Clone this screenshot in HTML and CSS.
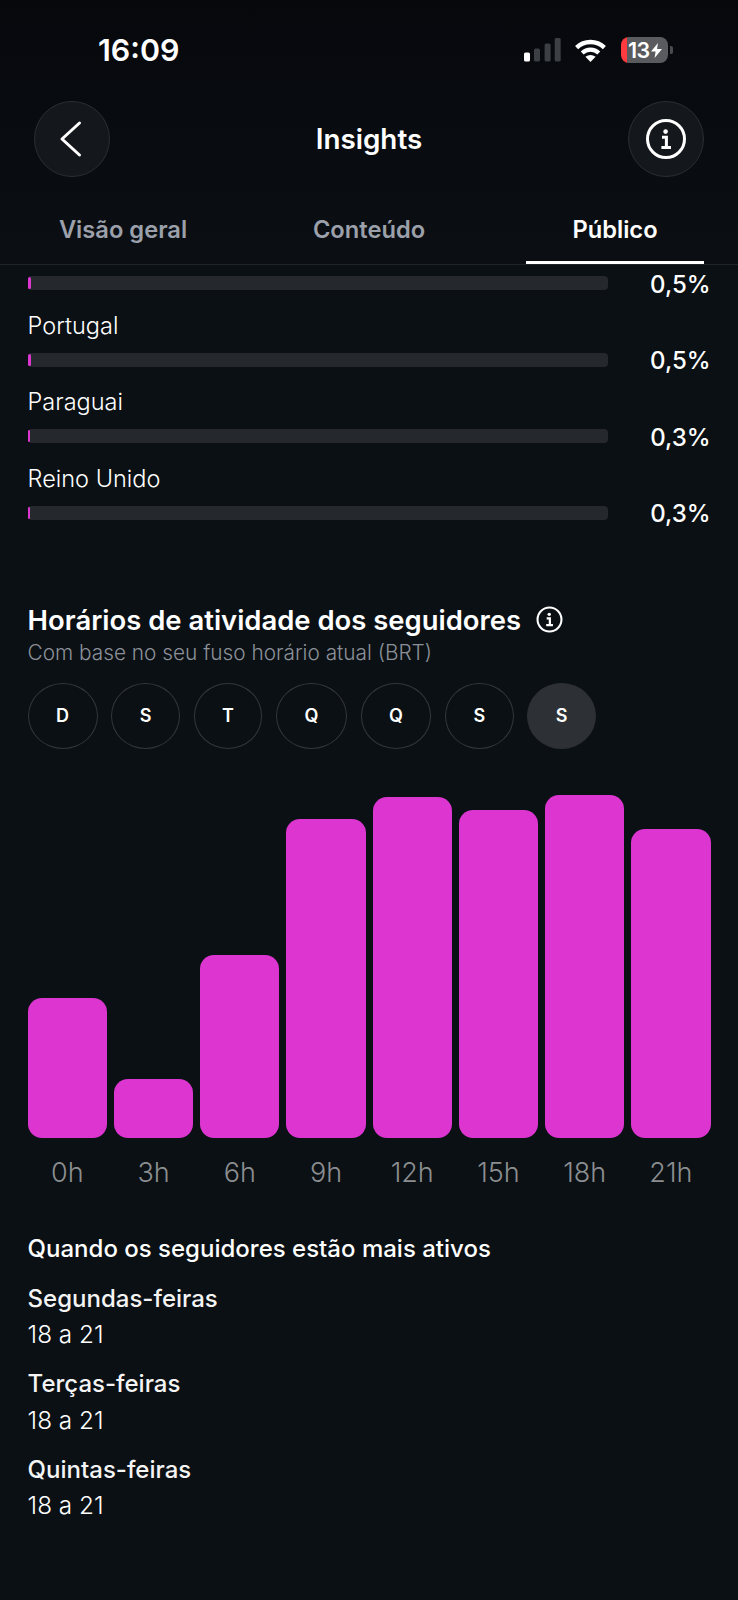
FILE: index.html
```html
<!DOCTYPE html>
<html lang="pt-BR">
<head>
    <meta charset="UTF-8">
    <meta name="viewport" content="width=device-width, initial-scale=1.0">
    <title>Insights</title>
    <link rel="stylesheet" href="styles.css">
</head>
<body>
    <div class="top">
        <!-- status bar -->
        <div class="status-bar">
            <span class="time">16:09</span>
            <div class="status-icons">
                <svg class="signal" width="37" height="24" viewBox="0 0 37 24">
                    <rect x="0" y="14.6" width="6" height="9" rx="1.5" fill="#fff"/>
                    <rect x="10" y="10.6" width="6" height="13" rx="1.5" fill="#3c3f43"/>
                    <rect x="20.6" y="5.6" width="6" height="18" rx="1.5" fill="#3c3f43"/>
                    <rect x="30.7" y="0" width="6" height="23.6" rx="1.5" fill="#3c3f43"/>
                </svg>
                <svg class="wifi" width="33" height="24" viewBox="0 0 33 24">
                    <path d="M2.6 9.6 A 20 20 0 0 1 30.4 9.6" fill="none" stroke="#fff" stroke-width="4.4"/>
                    <path d="M8.2 15 A 12 12 0 0 1 24.8 15" fill="none" stroke="#fff" stroke-width="4.2"/>
                    <path d="M11.4 18.8 Q16.5 15 21.6 18.8 L16.5 24 Z" fill="#fff"/>
                </svg>
                <div class="battery">
                    <span class="battery-num">13</span>
                    <svg width="11" height="15" viewBox="0 0 11 15">
                        <path d="M7 0 L0 8.6 H4.6 L3.6 15 L11 6 H6 Z" fill="#fff"/>
                    </svg>
                </div>
                <span class="battery-nub"></span>
            </div>
        </div>

        <!-- header -->
        <header class="page-header">
            <button class="round-btn">
                <svg width="76" height="76" viewBox="0 0 76 76">
                    <path d="M45.5 22 L28 38 L45.5 54" fill="none" stroke="#fff" stroke-width="3" stroke-linecap="round" stroke-linejoin="round"/>
                </svg>
            </button>
            <h1>Insights</h1>
            <button class="round-btn">
                <svg width="44" height="44" viewBox="0 0 44 44">
                    <circle cx="22" cy="22" r="18.5" fill="none" stroke="#fff" stroke-width="3"/>
                    <circle cx="21.6" cy="14.6" r="2.3" fill="#fff"/>
                    <path d="M18 20.2 H22.4 V30.6 M17.4 30.6 H27" fill="none" stroke="#fff" stroke-width="3"/>
                </svg>
            </button>
        </header>

        <!-- tabs -->
        <nav class="tabs">
            <a class="tab">Visão geral</a>
            <a class="tab">Conteúdo</a>
            <a class="tab active">Público</a>
        </nav>
    </div>

    <main class="content">
        <!-- lista de países -->
        <div class="bar-row">
            <div class="track"><div class="fill" style="width: 3px"></div></div>
            <span class="value">0,5%</span>
        </div>
        <div class="country">Portugal</div>
        <div class="bar-row">
            <div class="track"><div class="fill" style="width: 3px"></div></div>
            <span class="value">0,5%</span>
        </div>
        <div class="country">Paraguai</div>
        <div class="bar-row">
            <div class="track"><div class="fill" style="width: 2px"></div></div>
            <span class="value">0,3%</span>
        </div>
        <div class="country">Reino Unido</div>
        <div class="bar-row">
            <div class="track"><div class="fill" style="width: 2px"></div></div>
            <span class="value">0,3%</span>
        </div>

        <!-- horários -->
        <div class="section-title">
            <h2>Horários de atividade dos seguidores</h2>
            <svg width="27" height="27" viewBox="0 0 44 44">
                <circle cx="22" cy="22" r="19.5" fill="none" stroke="#fff" stroke-width="3.4"/>
                <circle cx="21.6" cy="13.6" r="2.8" fill="#fff"/>
                <path d="M17.4 20.2 H22.6 V31 M16.6 31 H27.6" fill="none" stroke="#fff" stroke-width="3.6"/>
            </svg>
        </div>
        <p class="subtitle">Com base no seu fuso horário atual (BRT)</p>

        <div class="days">
            <span class="day">D</span>
            <span class="day">S</span>
            <span class="day">T</span>
            <span class="day">Q</span>
            <span class="day">Q</span>
            <span class="day">S</span>
            <span class="day selected">S</span>
        </div>

        <div class="chart">
            <div class="column" style="height: 140px"></div>
            <div class="column" style="height: 59px"></div>
            <div class="column" style="height: 183px"></div>
            <div class="column" style="height: 319px"></div>
            <div class="column" style="height: 341px"></div>
            <div class="column" style="height: 328px"></div>
            <div class="column" style="height: 343px"></div>
            <div class="column" style="height: 309px"></div>
        </div>
        <div class="chart-labels">
            <span>0h</span>
            <span>3h</span>
            <span>6h</span>
            <span>9h</span>
            <span>12h</span>
            <span>15h</span>
            <span>18h</span>
            <span>21h</span>
        </div>

        <h3 class="active-title">Quando os seguidores estão mais ativos</h3>
        <div class="active-day">Segundas-feiras</div>
        <div class="active-hours">18 a 21</div>
        <div class="active-day">Terças-feiras</div>
        <div class="active-hours">18 a 21</div>
        <div class="active-day">Quintas-feiras</div>
        <div class="active-hours">18 a 21</div>
    </main>
</body>
</html>
```

FILE: styles.css
```css
* {
    box-sizing: border-box;
}

html, body {
    margin: 0;
    height: 1600px;
    overflow: hidden;
    background: #0b1014;
    color: #fff;
    font-family: "Inter", "Liberation Sans", sans-serif;
}

.top {
    background: linear-gradient(180deg, #06080c 0%, #0b0f13 100%);
}

/* status bar */
.status-bar {
    display: flex;
    align-items: center;
    height: 101px;
    padding: 0 65px 1px 98px;
}

.time {
    font-size: 30.4px;
    font-weight: 600;
}

.status-icons {
    display: flex;
    align-items: center;
    margin-left: auto;
}

.signal {
    margin-right: 13px;
}

.wifi {
    margin-right: 14px;
}

.battery {
    display: flex;
    align-items: center;
    gap: 1px;
    width: 47px;
    height: 26px;
    padding-left: 7px;
    border-radius: 8px;
    background: linear-gradient(90deg, #ff3b3f 6px, #5a5b5e 6px);
}

.battery-num {
    font-size: 21.5px;
    font-weight: 600;
    letter-spacing: -0.5px;
}

.battery-nub {
    width: 3px;
    height: 8px;
    margin-left: 2px;
    border-radius: 0 2px 2px 0;
    background: #4a4b4e;
}

/* header */
.page-header {
    display: flex;
    align-items: center;
    justify-content: space-between;
    padding: 0 34px;
}

.page-header h1 {
    margin: 0;
    font-size: 27.8px;
    font-weight: 600;
    line-height: 76px;
}

.round-btn {
    display: flex;
    align-items: center;
    justify-content: center;
    width: 76px;
    height: 76px;
    padding: 0;
    border: 1.5px solid #2a2f35;
    border-radius: 50%;
    background: #14171b;
}

.round-btn svg {
    flex: none;
}

/* tabs */
.tabs {
    display: flex;
    gap: 68px;
    height: 88px;
    padding: 0 34px;
    border-bottom: 1px solid #20242a;
}

.tab {
    flex: 1;
    height: 87px;
    padding-top: 37px;
    line-height: 32px;
    text-align: center;
    font-size: 23.7px;
    font-weight: 600;
    color: #9ba0aa;
}

.tab.active {
    color: #fff;
    border-bottom: 3px solid #fff;
}

/* content */
.content {
    padding: 2px 27.4px 0 27.6px;
}

.bar-row {
    display: flex;
    align-items: center;
    height: 32px;
    margin-bottom: 8.67px;
}

.track {
    width: 580.4px;
    height: 14px;
    padding: 1px 0;
    border-radius: 4px;
    background: #25282d;
}

.fill {
    height: 100%;
    border-radius: 2px;
    background: #dc35d0;
}

.value {
    margin-left: auto;
    padding-top: 2px;
    font-size: 24px;
    font-weight: 500;
}

.country {
    height: 36px;
    line-height: 36px;
    font-size: 23.5px;
    font-weight: 350;
}

.section-title {
    display: flex;
    align-items: center;
    gap: 15px;
    height: 34px;
    margin-top: 73.67px;
}

.section-title h2 {
    margin: 0;
    font-size: 27.45px;
    font-weight: 600;
}

.subtitle {
    margin: 4px 0 0;
    line-height: 24px;
    font-size: 20.8px;
    font-weight: 350;
    color: #8c9099;
}

.days {
    display: flex;
    gap: 13.6px;
    margin-top: 18px;
}

.day {
    display: flex;
    align-items: center;
    height: 66px;
    padding: 0 27.5px;
    border: 1.5px solid #33373c;
    border-radius: 50%;
    font-size: 18px;
    font-weight: 600;
}

.day.selected {
    background: #2d3135;
    border-color: #2d3135;
}

/* chart */
.chart, .chart-labels {
    display: grid;
    grid-template-columns: repeat(8, 1fr);
    column-gap: 6.8px;
}

.chart {
    align-items: end;
    height: 360px;
    margin-top: 29px;
}

.column {
    border-radius: 14px;
    background: #dc35d0;
}

.chart-labels {
    margin-top: 19px;
    line-height: 32px;
    text-align: center;
    font-size: 27px;
    font-weight: 300;
    color: #8b8e90;
}

/* mais ativos */
.active-title {
    margin: 45px 0 0;
    line-height: 30px;
    font-size: 24px;
    font-weight: 500;
}

.active-day {
    margin-top: 20px;
    line-height: 30px;
    font-size: 24px;
    font-weight: 500;
    color: #f4f4f4;
}

.active-hours {
    margin-top: 5.5px;
    line-height: 30px;
    font-size: 24.3px;
    font-weight: 350;
}
```
